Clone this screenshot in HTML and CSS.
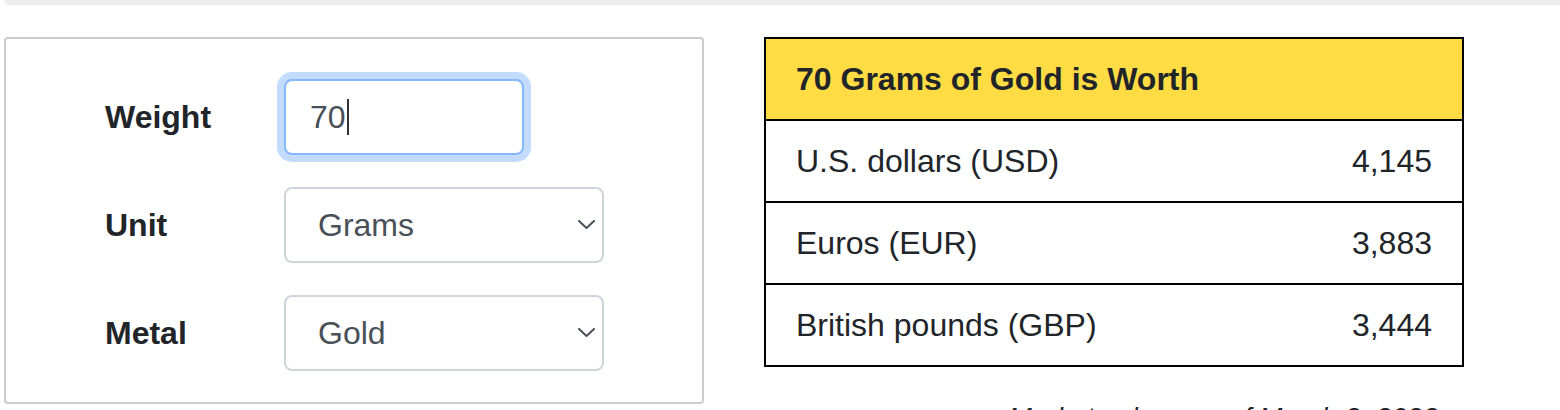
FILE: index.html
```html
<!DOCTYPE html>
<html lang="en">
<head>
<meta charset="utf-8">
<title>Gold Value Calculator</title>
<link rel="stylesheet" href="styles.css">
</head>
<body>
<div class="page">
  <div class="topbar"></div>
  <div class="columns">
    <form class="calc">
      <div class="field">
        <label class="label" for="weight">Weight</label>
        <div class="input is-focused" id="weight"><span class="input-text">70</span><span class="caret"></span></div>
      </div>
      <div class="field">
        <label class="label" for="unit">Unit</label>
        <div class="select-wrap">
          <select class="select" id="unit">
            <option>Grams</option>
            <option>Ounces</option>
            <option>Kilograms</option>
          </select>
          <svg class="chevron" viewBox="0 0 17 9" aria-hidden="true"><path d="M1 1 L8.5 8 L16 1" fill="none" stroke="#495057" stroke-width="2" stroke-linecap="round" stroke-linejoin="round"/></svg>
        </div>
      </div>
      <div class="field">
        <label class="label" for="metal">Metal</label>
        <div class="select-wrap">
          <select class="select" id="metal">
            <option>Gold</option>
            <option>Silver</option>
            <option>Platinum</option>
          </select>
          <svg class="chevron" viewBox="0 0 17 9" aria-hidden="true"><path d="M1 1 L8.5 8 L16 1" fill="none" stroke="#495057" stroke-width="2" stroke-linecap="round" stroke-linejoin="round"/></svg>
        </div>
      </div>
    </form>
    <div class="results">
      <table class="worth">
        <thead>
          <tr><th colspan="2">70 Grams of Gold is Worth</th></tr>
        </thead>
        <tbody>
          <tr><td>U.S. dollars (USD)</td><td class="num">4,145</td></tr>
          <tr><td>Euros (EUR)</td><td class="num">3,883</td></tr>
          <tr><td>British pounds (GBP)</td><td class="num">3,444</td></tr>
        </tbody>
      </table>
      <p class="note">Market values as of March 3, 2023</p>
    </div>
  </div>
</div>
</body>
</html>
```
FILE: styles.css
```css
* { box-sizing: border-box; }

html, body {
  margin: 0;
  background: #ffffff;
  overflow: hidden;
}

body {
  font-family: "Liberation Sans", Arial, sans-serif;
  color: #212529;
}

.page {
  padding-left: 4px;
}

.topbar {
  height: 5px;
  background: #eeeeee;
  border-bottom-left-radius: 8px;
}

.columns {
  display: flex;
  gap: 60px;
  margin-top: 32px;
  align-items: flex-start;
}

.calc {
  width: 700px;
  margin: 0;
  border: 2px solid #cccccc;
  border-radius: 4px;
  padding: 40px 0 31px 99px;
  display: flex;
  flex-direction: column;
  gap: 32px;
}

.field {
  display: flex;
  align-items: center;
}

.label {
  width: 179px;
  font-weight: 700;
  font-size: 32px;
  line-height: 48px;
  color: #212529;
}

.input {
  width: 240px;
  height: 76px;
  border: 2px solid #86b7fe;
  border-radius: 8px;
  box-shadow: 0 0 0 7px rgba(13, 110, 253, 0.25);
  padding: 0 24px;
  display: flex;
  align-items: center;
  font-size: 32px;
  color: #495057;
  background: #ffffff;
}

.caret {
  width: 2px;
  height: 36px;
  background: #333333;
  margin-left: 1px;
}

.select-wrap {
  position: relative;
  width: 320px;
  height: 76px;
}

.select {
  -webkit-appearance: none;
  appearance: none;
  width: 100%;
  height: 100%;
  margin: 0;
  border: 2px solid #ced4da;
  border-radius: 8px;
  background: #ffffff;
  padding: 0 40px 0 32px;
  font-family: "Liberation Sans", Arial, sans-serif;
  font-size: 32px;
  color: #495057;
}

.chevron {
  position: absolute;
  right: 9px;
  top: 33px;
  width: 17px;
  height: 9px;
  pointer-events: none;
}

.results {
  width: 700px;
}

.worth {
  width: 700px;
  border-collapse: collapse;
  font-size: 32px;
  line-height: 48px;
  color: #212529;
}

.worth tr {
  border: 2px solid #000000;
}

.worth th,
.worth td {
  padding: 16px 30px;
  font-weight: 400;
  text-align: left;
}

.worth th {
  background: #ffdc44;
  font-weight: 700;
}

.worth .num {
  text-align: right;
}

.note {
  margin: 30px 0 0;
  padding-right: 26px;
  font-style: italic;
  font-size: 28px;
  line-height: 42px;
  text-align: right;
}
```
